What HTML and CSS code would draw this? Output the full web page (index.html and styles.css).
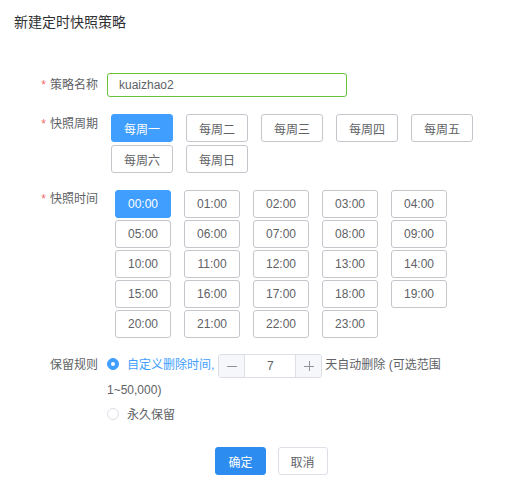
FILE: index.html
```html
<!DOCTYPE html>
<html lang="zh-CN">
<head>
    <meta charset="UTF-8">
    <title>新建定时快照策略</title>
    <link rel="stylesheet" href="styles.css">
</head>
<body>
    <div class="dialog">
        <div class="dialog-title">新建定时快照策略</div>

        <div class="form">
            <div class="form-item item-name">
                <label class="form-label required">策略名称</label>
                <div class="form-content">
                    <input class="text-input" type="text" value="kuaizhao2">
                </div>
            </div>

            <div class="form-item item-week">
                <label class="form-label required">快照周期</label>
                <div class="form-content">
                    <div class="week-grid">
                        <button class="opt active">每周一</button>
                        <button class="opt">每周二</button>
                        <button class="opt">每周三</button>
                        <button class="opt">每周四</button>
                        <button class="opt">每周五</button>
                        <button class="opt">每周六</button>
                        <button class="opt">每周日</button>
                    </div>
                </div>
            </div>

            <div class="form-item item-time">
                <label class="form-label required">快照时间</label>
                <div class="form-content">
                    <div class="time-grid" id="timeGrid"></div>
                </div>
            </div>

            <div class="form-item item-keep">
                <label class="form-label">保留规则</label>
                <div class="form-content keep-content">
                    <div class="radio-line checked">
                        <span class="radio"></span><span class="radio-text">自定义删除时间,</span><span class="number-input">
                            <span class="num-btn minus"><svg width="10" height="10" viewBox="0 0 10 10"><path d="M0 5.5h10" stroke="#909399" stroke-width="1"/></svg></span>
                            <span class="num-value">7</span>
                            <span class="num-btn plus"><svg width="10" height="10" viewBox="0 0 10 10"><path d="M0 5.5h10M5.5 0v10" stroke="#909399" stroke-width="1"/></svg></span>
                        </span><span class="after-text">天自动删除 (可选范围</span><br><span class="range-text">1~50,000)</span>
                    </div>
                    <div class="radio-line">
                        <span class="radio"></span><span class="radio-text">永久保留</span>
                    </div>
                </div>
            </div>
        </div>

        <div class="dialog-footer">
            <button class="btn btn-primary">确定</button>
            <button class="btn">取消</button>
        </div>
    </div>

    <script>
        // fill the 24 hour buttons
        const grid = document.getElementById('timeGrid');
        for (let h = 0; h < 24; h++) {
            const b = document.createElement('button');
            b.className = 'opt' + (h === 0 ? ' active' : '');
            b.textContent = String(h).padStart(2, '0') + ':00';
            grid.appendChild(b);
        }
    </script>
</body>
</html>
```

FILE: styles.css
```css
body {
    margin: 0;
    background: #fff;
    font-family: "Liberation Sans", Arial, "Noto Sans CJK SC", sans-serif;
    font-size: 12px;
    color: #606266;
}
.dialog {
    width: 511px;
}
.dialog-title {
    padding: 12px 14px;
    font-size: 14px;
    line-height: 20px;
    color: #303133;
}
.form {
    padding-top: 29px;
}
.form-item {
    display: flex;
    align-items: flex-start;
}
.form-label {
    width: 98px;
    padding-right: 9px;
    text-align: right;
    flex-shrink: 0;
}
.form-label.required::before {
    content: "*";
    color: #f56c6c;
    margin-right: 4px;
}
.item-name .form-label {
    line-height: 24px;
}
.text-input {
    box-sizing: border-box;
    width: 240px;
    height: 24px;
    padding: 0 11px;
    border: 1px solid #67c23a;
    border-radius: 3px;
    font: inherit;
    color: #606266;
    outline: none;
}
.item-week {
    margin-top: 17px;
}
.item-week .form-label {
    line-height: 20px;
}
.week-grid {
    margin-left: 4px;
    display: grid;
    grid-template-columns: repeat(5, 62px);
    gap: 3px 13px;
}
.opt {
    height: 28px;
    padding: 0;
    border: 1px solid #c4c6cc;
    border-radius: 3px;
    background: #fff;
    font: inherit;
    color: #606266;
    cursor: pointer;
}
.opt.active {
    background: #409eff;
    border-color: #409eff;
    color: #fff;
}
.item-time {
    margin-top: 17px;
}
.item-time .form-label {
    line-height: 18px;
}
.time-grid {
    margin-left: 8px;
    display: grid;
    grid-template-columns: repeat(5, 56px);
    gap: 2px 13px;
}
.item-keep {
    margin-top: 15px;
}
.item-keep .form-label {
    line-height: 25px;
}
.keep-content {
    width: 350px;
}
.radio-line {
    line-height: 25px;
}
.radio-line + .radio-line {
    line-height: 24px;
}
.radio {
    display: inline-block;
    box-sizing: border-box;
    width: 12px;
    height: 12px;
    margin-right: 8px;
    border: 1px solid #dcdfe6;
    border-radius: 50%;
    vertical-align: -1px;
    position: relative;
}
.checked .radio {
    background: #409eff;
    border-color: #409eff;
}
.checked .radio::after {
    content: "";
    position: absolute;
    left: 3px;
    top: 3px;
    width: 4px;
    height: 4px;
    border-radius: 50%;
    background: #fff;
}
.checked .radio-text {
    color: #409eff;
}
.number-input {
    display: inline-flex;
    box-sizing: border-box;
    width: 104px;
    height: 24px;
    margin: 0 3px 0 4px;
    border: 1px solid #dcdfe6;
    border-radius: 3px;
    vertical-align: middle;
    line-height: 22px;
    overflow: hidden;
}
.num-btn {
    width: 25px;
    background: #f5f7fa;
    display: flex;
    align-items: center;
    justify-content: center;
}
.num-btn.minus {
    border-right: 1px solid #dcdfe6;
}
.num-btn.plus {
    border-left: 1px solid #dcdfe6;
}
.num-value {
    flex: 1;
    text-align: center;
    color: #606266;
}
.dialog-footer {
    display: flex;
    justify-content: center;
    gap: 12px;
    margin-top: 20px;
    padding-left: 32px;
}
.btn {
    height: 28px;
    padding: 0 12px;
    border: 1px solid #dcdfe6;
    border-radius: 3px;
    background: #fff;
    font: inherit;
    color: #606266;
    cursor: pointer;
}
.btn-primary {
    background: #2d8cf0;
    border-color: #2d8cf0;
    color: #fff;
}
```
